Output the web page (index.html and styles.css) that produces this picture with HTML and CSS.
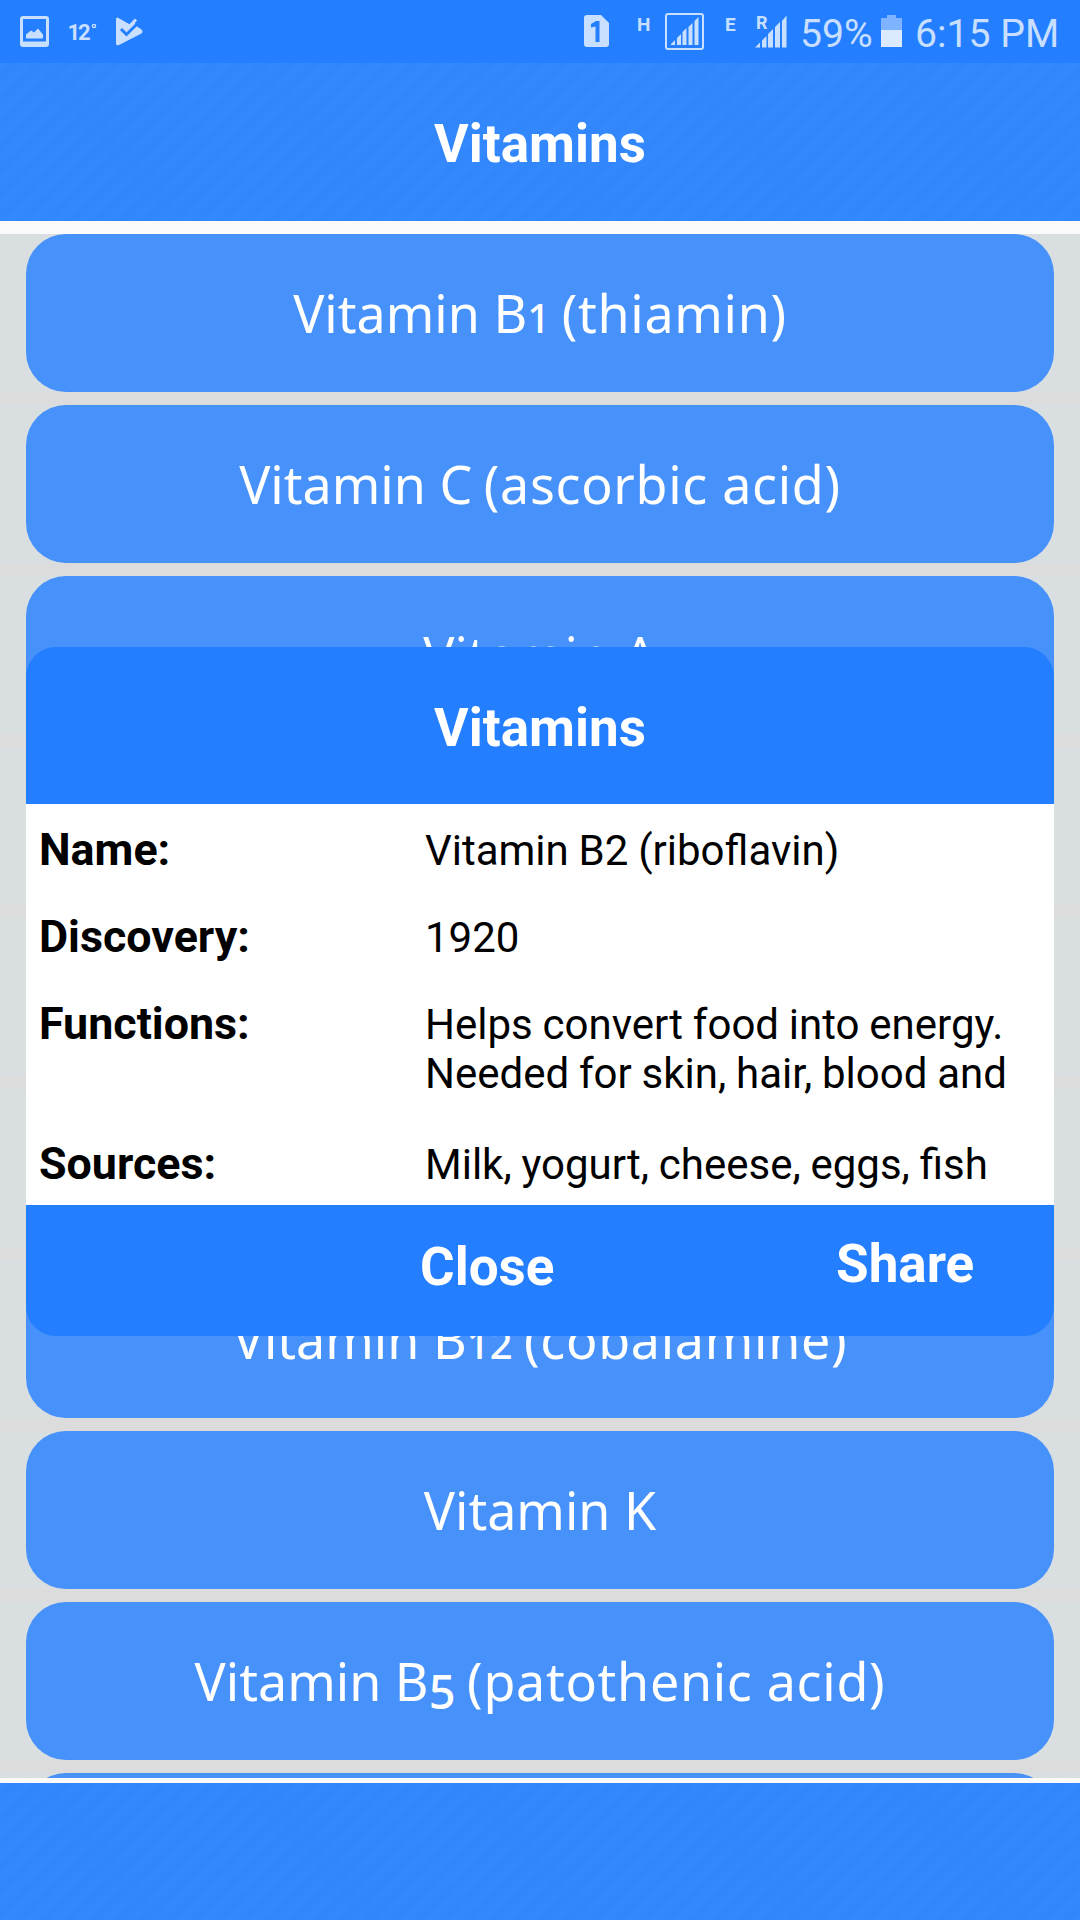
FILE: index.html
```html
<!DOCTYPE html>
<html lang="en">
<head>
    <meta charset="UTF-8">
    <meta name="viewport" content="width=device-width, initial-scale=1.0">
    <title>Vitamins</title>
    <link rel="stylesheet" href="styles.css">
</head>
<body>
    <div class="screen">
        <div class="statusBar">
            <svg class="statusLeft" width="160" height="63" viewBox="0 0 160 63">
                <path fill-rule="evenodd" d="M23 16h23q3 0 3 3v25q0 3-3 3H23q-3 0-3-3V19q0-3 3-3zM23 19v22.500h23V19z"/>
                <path d="M26 38.500v-4l5-4 3 2 4-4 5 6v4z"/>
                <text x="67.500" y="40" font-size="22" font-weight="700" textLength="23">12</text>
                <circle class="line" cx="94" cy="26" r="1.600" stroke-width="1.400"/>
                <path d="M116 19q0-2.500 2.500-1l10.500 6 2 1.500 3-4 3 5 4.500 3q2 2 0 4L119 45q-3 1-3-1.500z"/>
                <path class="cut" d="M121 29l5.500 5.500L141 20"/>
                <path class="line" d="M127 29l9-9.500" stroke-width="3"/>
            </svg>
            <svg class="statusRight" width="220" height="63" viewBox="580 0 220 63">
                <path d="M587 15h14l8 8v21q0 3-3 3h-19q-3 0-3-3V18q0-3 3-3z"/>
                <path fill="#237fff" d="M596 21h3.500v21h-4V26.500l-4.500 1V24z"/>
                <text x="637" y="31" font-size="19" font-weight="700">H</text>
                <rect class="line" x="666" y="14" width="37" height="35" rx="2" stroke-width="2"/>
                <path d="M671 45v-1l4-4v5zM677 45v-7l4-4v11zM682.500 45v-13l4-4v17zM688.500 45V27l4-4v22zM694.500 45V21l4-4v28z"/>
                <text x="725" y="31" font-size="19" font-weight="700">E</text>
                <text x="756" y="29" font-size="18" font-weight="700">R</text>
                <path d="M755 47.500l5-5v5zM762 47.500v-7l4.500-4.500v11.500zM768 47.500V34l5-5v18.500zM775 47.500V27l5-5v25.500zM782 47.500V21l4.500-5.500v32z"/>
            </svg>
            <span class="percent">59%</span>
            <svg class="battery" width="22" height="33" viewBox="0 0 22 33">
                <path opacity=".55" d="M0 15V3h6V0h9v3h6v12z"/>
                <path fill="#dceaff" d="M0 15h21v17H0z"/>
            </svg>
            <span class="clock">6:15 PM</span>
        </div>

        <div class="header stripes">Vitamins</div>

        <div class="list">
            <div class="row"><div class="item">Vitamin B<span class="num">1</span> <span class="chem">(thiamin)</span></div></div>
            <div class="row"><div class="item">Vitamin C <span class="chem">(ascorbic acid)</span></div></div>
            <div class="row"><div class="item">Vitamin A</div></div>
            <div class="row"><div class="item"></div></div>
            <div class="row"><div class="item"></div></div>
            <div class="row"><div class="item"></div></div>
            <div class="row"><div class="item">Vitamin B<span class="num">12</span> <span class="chem">(cobalamine)</span></div></div>
            <div class="row"><div class="item">Vitamin K</div></div>
            <div class="row"><div class="item">Vitamin B<span class="num low">5</span> <span class="chem">(patothenic acid)</span></div></div>
            <div class="row"><div class="item"></div></div>
        </div>

        <div class="footer stripes"></div>

        <!-- details dialog -->
        <div class="dialog">
            <div class="dialogTitle">Vitamins</div>
            <div class="dialogBody">
                <div class="field">
                    <div class="label">Name:</div>
                    <div class="value">Vitamin B2 (riboflavin)</div>
                </div>
                <div class="field">
                    <div class="label">Discovery:</div>
                    <div class="value">1920</div>
                </div>
                <div class="field tall">
                    <div class="label">Functions:</div>
                    <div class="value">Helps convert food into energy.<br>Needed for skin, hair, blood and</div>
                </div>
                <div class="field">
                    <div class="label">Sources:</div>
                    <div class="value">Milk, yogurt, cheese, eggs, fish</div>
                </div>
            </div>
            <div class="dialogButtons">
                <div class="btn btnClose">Close</div>
                <div class="btn btnShare">Share</div>
            </div>
        </div>
    </div>
</body>
</html>
```

FILE: styles.css
```css
* {
    padding: 0px;
    margin: 0px;
    box-sizing: border-box;
}

body {
    background-color: #fafafa;
    font-family: Roboto, "Liberation Sans", sans-serif;
    overflow: hidden;
}

.screen {
    display: flex;
    flex-direction: column;
    position: relative;
    width: 1080px;
    height: 1920px;
    overflow: hidden;
}

/* Status bar */

.statusBar {
    display: flex;
    height: 63px;
    background-color: #237fff;
    color: #c8dfff;
    font-size: 39.2px;
    line-height: 68px;
    white-space: nowrap;
}

.statusBar svg {
    flex: none;
    fill: #c8dfff;
}

.statusBar .line {
    fill: none;
    stroke: #c8dfff;
}

.statusBar .cut {
    fill: none;
    stroke: #237fff;
    stroke-width: 3;
}

.statusRight {
    margin-left: 420px;
}

.percent {
    width: 81px;
}

.statusBar .battery {
    margin-top: 15px;
}

.clock {
    margin-left: 12px;
}

/* Top and bottom bars */

.stripes {
    background: repeating-linear-gradient(137deg, #3488fe 0px, #3488fe 5px, #3186fb 9px, #3186fb 13px, #3488fe 17px);
}

.header {
    height: 158px;
    margin-bottom: 13px;
    color: white;
    font-size: 53px;
    font-weight: bold;
    line-height: 162px;
    text-align: center;
}

.footer {
    height: 137px;
    margin-top: 5px;
}

/* Vitamin list */

.list {
    height: 1544px;
    overflow: hidden;
    background-color: #dcdcdc;
}

.row {
    height: 158px;
    margin-bottom: 13px;
    padding: 0px 26px;
    background-color: #d9dee0;
}

.item {
    height: 158px;
    border-radius: 40px;
    background-color: #4791fb;
    color: white;
    font-family: "Noto Sans", sans-serif;
    font-size: 52px;
    line-height: 157px;
    text-align: center;
    white-space: nowrap;
}

.chem {
    margin-left: -2px;
    letter-spacing: 0.7px;
}

.num {
    font-size: 40px;
    font-weight: 500;
}

.low {
    position: relative;
    top: 8px;
    font-size: 47px;
}

/* Dialog */

.dialog {
    position: absolute;
    top: 647px;
    left: 26px;
    width: 1028px;
    height: 689px;
    border-radius: 30px;
    background-color: #237fff;
    overflow: hidden;
}

.dialogTitle {
    height: 157px;
    color: white;
    font-size: 53px;
    font-weight: bold;
    line-height: 162px;
    text-align: center;
}

.dialogBody {
    height: 401px;
    padding: 19px 13px 0px;
    background-color: white;
    color: black;
}

.field {
    display: grid;
    grid-template-columns: 386px 1fr;
    align-items: baseline;
    height: 87px;
}

.tall {
    height: 140px;
}

.label {
    font-size: 44.8px;
    font-weight: bold;
    line-height: 53px;
}

.value {
    font-size: 42px;
    line-height: 49px;
    word-spacing: -0.6px;
    white-space: nowrap;
}

.dialogButtons {
    display: flex;
    color: white;
    font-size: 53px;
    font-weight: bold;
}

.btn {
    line-height: 62px;
}

.btnClose {
    width: 416px;
    padding: 31px 0px 0px 394px;
    margin-right: 394px;
}

.btnShare {
    padding-top: 28px;
}
```
